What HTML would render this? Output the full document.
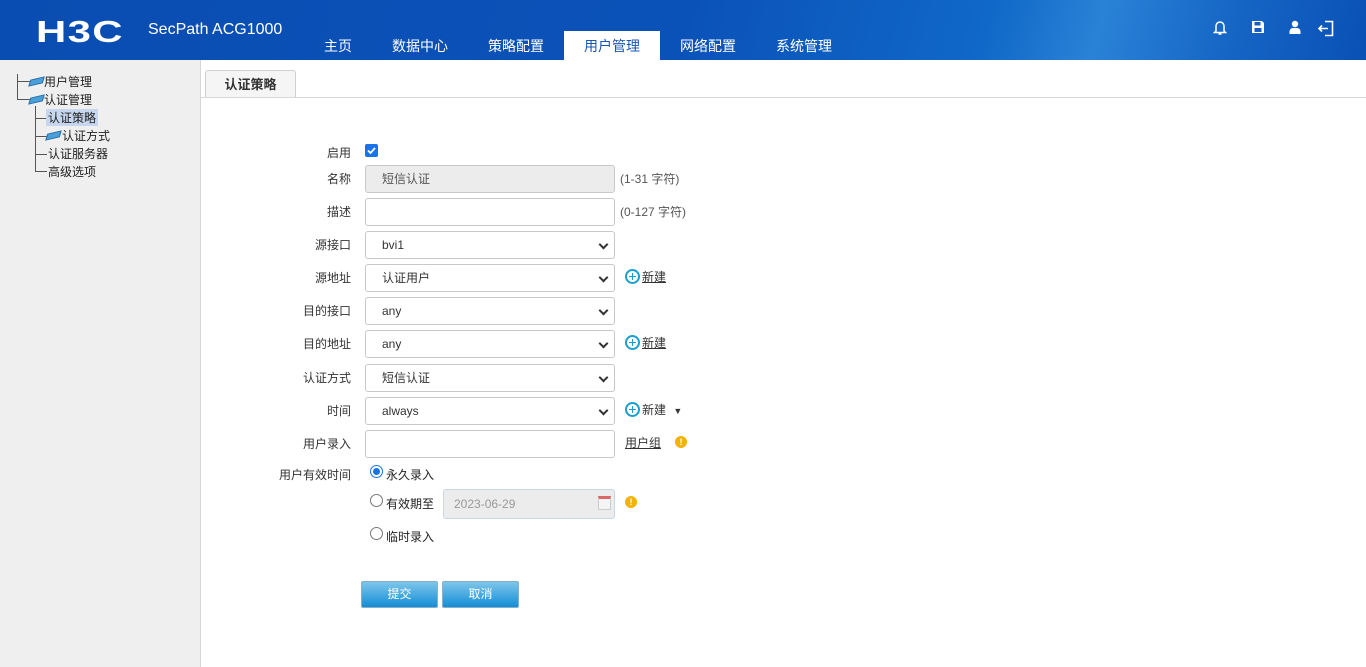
<!DOCTYPE html>
<html><head><meta charset="utf-8"><style>
*{box-sizing:border-box;margin:0;padding:0}
body{width:1366px;height:667px;overflow:hidden;font-family:"Liberation Sans","Noto Sans CJK SC",sans-serif;font-size:12px;color:#333;background:#fff;position:relative}
.hdr{position:absolute;left:0;top:0;width:1366px;height:60px;background:linear-gradient(105deg,#0a4db2 0%,#0b52b8 50%,#1068c8 72%,#2a82d6 80%,#1565c5 90%,#0a50b5 100%)}
.logo{position:absolute;left:36px;top:14px;color:#fff;font:bold 31px "Liberation Sans",sans-serif;letter-spacing:1px;transform:scaleX(1.35);transform-origin:left}
.prod{position:absolute;left:148px;top:21px;color:#fff;font-size:16px}
.nav{position:absolute;top:31px;height:29px;width:96px;text-align:center;line-height:31px;color:#fff;font-size:14px}
.nav.on{background:#fff;color:#1a55b5}
.ic{position:absolute;top:20px}
.side{position:absolute;left:0;top:60px;width:201px;height:607px;background:#efefef;border-right:1px solid #d6d6d6}
.t{position:absolute;font-size:12px;color:#222;white-space:nowrap}
.ln{position:absolute;background:#555}
.fold{position:absolute;width:13px;height:7px;background:#4a9fd6;border:1px solid #2a70b0;transform:skewX(-30deg) rotate(-15deg)}
.tab{position:absolute;left:205px;top:70px;width:91px;height:28px;border:1px solid #d0d0d0;border-bottom:none;border-radius:3px 3px 0 0;background:#f5f5f5;text-align:center;line-height:28px;font-weight:bold;font-size:13px}
.tabline{position:absolute;left:201px;top:97px;width:1165px;height:1px;background:#d8d8d8}
.lb{position:absolute;right:1015px;font-size:12px;color:#333;text-align:right;white-space:nowrap}
.in{position:absolute;left:365px;width:250px;height:28px;border:1px solid #c8c8c8;border-radius:3px;background:#fff;padding-left:16px;line-height:26px;font-size:12px;color:#333}
.in.dis{background:#ececec;color:#555}
.sel:after{content:"";position:absolute;right:7px;top:9px;width:5px;height:5px;border-right:2px solid #333;border-bottom:2px solid #333;transform:rotate(45deg)}
.hint{position:absolute;left:620px;color:#555;font-size:12px}
.add{position:absolute;left:625px;font-size:12px;color:#333}
.add i{display:inline-block;width:15px;height:15px;border:2px solid #1a9fd0;border-radius:50%;vertical-align:-3px;margin-right:2px;position:relative}
.add i:before{content:"";position:absolute;top:2px;width:1.5px;height:7px;background:#1a9fd0;left:4.8px}
.add i:after{content:"";position:absolute;left:2px;top:4.8px;width:7px;height:1.5px;background:#1a9fd0}
.u{text-decoration:underline}
.warn{position:absolute;width:12px;height:12px;border-radius:50%;background:#f5b301;color:#fff;font-size:9px;font-weight:bold;text-align:center;line-height:12px}
.rad{position:absolute;left:370px;width:13px;height:13px;border:1px solid #777;border-radius:50%;background:#fff}
.rad.on{border:1px solid #1a73e8}
.rad.on:after{content:"";position:absolute;left:2px;top:2px;width:7px;height:7px;border-radius:50%;background:#1a73e8}
.btn{position:absolute;top:581px;width:77px;height:27px;border:1px solid #8aaec8;border-radius:2px;background:linear-gradient(#7cc6ea,#168dd6);color:#fff;text-align:center;line-height:25px;font-size:12px}
</style></head><body>
<div class="hdr">
<div class="logo">H3C</div>
<div class="prod">SecPath ACG1000</div>
<div class="nav" style="left:290px">主页</div>
<div class="nav" style="left:372px">数据中心</div>
<div class="nav" style="left:468px">策略配置</div>
<div class="nav on" style="left:564px">用户管理</div>
<div class="nav" style="left:660px">网络配置</div>
<div class="nav" style="left:756px">系统管理</div>
<svg class="ic" style="left:1213px" width="14" height="16" viewBox="0 0 14 16"><path d="M3 11V6a4 4 0 0 1 8 0v5l1.5 1.5h-11z M5.5 14h3" fill="none" stroke="#fff" stroke-width="1.5"/></svg>
<svg class="ic" style="left:1251px" width="14" height="14" viewBox="0 0 14 14"><path d="M1 1h10l2 2v10H1z" fill="#fff"/><rect x="3.5" y="2" width="6" height="3.5" fill="#1a5cc0"/><rect x="3.5" y="8" width="7" height="4" fill="#1a5cc0"/></svg>
<svg class="ic" style="left:1289px" width="12" height="14" viewBox="0 0 12 14"><circle cx="6" cy="4" r="3.2" fill="#fff"/><path d="M0.5 14v-2.5a3.5 3.5 0 0 1 3.5-3.5h4a3.5 3.5 0 0 1 3.5 3.5V14z" fill="#fff"/></svg>
<svg class="ic" style="left:1318px" width="16" height="17" viewBox="0 0 16 17"><path d="M7 1.5h7.5v14H7 M1 8.5h9 M4 5.5l-3 3 3 3" fill="none" stroke="#fff" stroke-width="1.6"/></svg>
</div>
<div class="side">
<div class="ln" style="left:17px;top:14px;width:1px;height:25px"></div>
<div class="ln" style="left:17px;top:21px;width:14px;height:1px"></div>
<div class="ln" style="left:17px;top:39px;width:14px;height:1px"></div>
<div class="fold" style="left:30px;top:18px"></div>
<div class="fold" style="left:30px;top:36px"></div>
<div class="t" style="left:44px;top:13px">用户管理</div>
<div class="t" style="left:44px;top:31px">认证管理</div>
<div class="ln" style="left:35px;top:46px;width:1px;height:65px"></div>
<div class="ln" style="left:35px;top:58px;width:12px;height:1px"></div>
<div class="ln" style="left:35px;top:76px;width:12px;height:1px"></div>
<div class="ln" style="left:35px;top:94px;width:12px;height:1px"></div>
<div class="ln" style="left:35px;top:111px;width:12px;height:1px"></div>
<div class="t" style="left:46px;top:49px;background:#c5d6ee;padding:0 2px">认证策略</div>
<div class="fold" style="left:47px;top:72px"></div>
<div class="t" style="left:62px;top:67px">认证方式</div>
<div class="t" style="left:48px;top:85px">认证服务器</div>
<div class="t" style="left:48px;top:103px">高级选项</div>
</div>
<div class="tab">认证策略</div>
<div class="tabline"></div>

<div class="lb" style="top:144px">启用</div>
<div style="position:absolute;left:365px;top:144px;width:13px;height:13px;background:#1a73e8;border-radius:2px"><svg width="13" height="13"><path d="M3 6.5l2.5 2.5 4.5-5" fill="none" stroke="#fff" stroke-width="1.8"/></svg></div>

<div class="lb" style="top:170px">名称</div><div class="in dis" style="top:165px">短信认证</div><div class="hint" style="top:170px">(1-31 字符)</div>
<div class="lb" style="top:203px">描述</div><div class="in" style="top:198px"></div><div class="hint" style="top:203px">(0-127 字符)</div>
<div class="lb" style="top:236px">源接口</div><div class="in sel" style="top:231px">bvi1</div>
<div class="lb" style="top:269px">源地址</div><div class="in sel" style="top:264px">认证用户</div><div class="add" style="top:268px"><i></i><span class="u">新建</span></div>
<div class="lb" style="top:302px">目的接口</div><div class="in sel" style="top:297px">any</div>
<div class="lb" style="top:335px">目的地址</div><div class="in sel" style="top:330px">any</div><div class="add" style="top:334px"><i></i><span class="u">新建</span></div>
<div class="lb" style="top:369px">认证方式</div><div class="in sel" style="top:364px">短信认证</div>
<div class="lb" style="top:402px">时间</div><div class="in sel" style="top:397px">always</div><div class="add" style="top:401px"><i></i>新建 <span style="font-size:9px;margin-left:4px">▼</span></div>
<div class="lb" style="top:435px">用户录入</div><div class="in" style="top:430px"></div><div class="add u" style="top:434px">用户组</div><div class="warn" style="left:675px;top:436px">!</div>
<div class="lb" style="top:466px">用户有效时间</div>
<div class="rad on" style="top:465px"></div><div class="t" style="left:386px;top:466px">永久录入</div>
<div class="rad" style="top:494px"></div><div class="t" style="left:386px;top:495px">有效期至</div>
<div class="in dis" style="left:443px;width:172px;top:489px;height:30px;border-color:#c5d8ee;color:#999;line-height:28px;padding-left:10px">2023-06-29<span style="position:absolute;right:3px;top:6px;width:13px;height:14px;border:1px solid #ccc;border-top:3px solid #d66;background:#f4f4f4"></span></div>
<div class="warn" style="left:625px;top:496px">!</div>
<div class="rad" style="top:527px"></div><div class="t" style="left:386px;top:528px">临时录入</div>

<div class="btn" style="left:361px">提交</div>
<div class="btn" style="left:442px">取消</div>
</body></html>
